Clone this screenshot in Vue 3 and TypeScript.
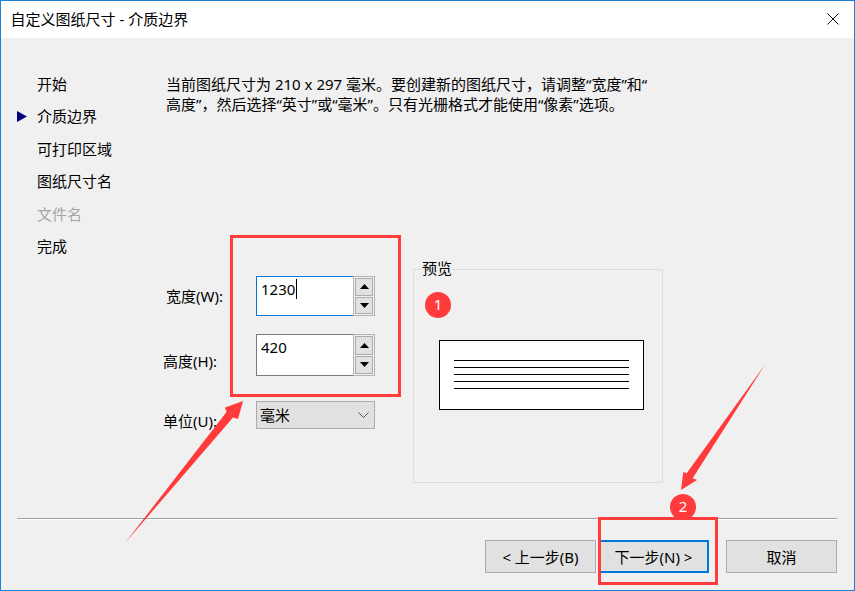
<script setup lang="ts">
const steps = [
  { label: '开始', active: false, disabled: false },
  { label: '介质边界', active: true, disabled: false },
  { label: '可打印区域', active: false, disabled: false },
  { label: '图纸尺寸名', active: false, disabled: false },
  { label: '文件名', active: false, disabled: true },
  { label: '完成', active: false, disabled: false },
]
const previewLines = [1, 2, 3, 4, 5]
</script>

<template>
  <div class="page">
    <div class="window">
      <header class="titlebar">
        <span>自定义图纸尺寸 - 介质边界</span>
        <svg class="close" width="12" height="12" viewBox="0 0 12 12">
          <path d="M0.5 0.5L11.5 11.5M11.5 0.5L0.5 11.5" stroke="#111" stroke-width="1" fill="none" />
        </svg>
      </header>

      <div class="content">
        <ul class="steps">
          <li v-for="s in steps" :key="s.label" class="step" :class="{ disabled: s.disabled }">
            <span class="marker">
              <svg v-if="s.active" width="10" height="11" viewBox="0 0 10 11">
                <path d="M0 0L10 5.5L0 11Z" fill="#000080" />
              </svg>
            </span>
            <span>{{ s.label }}</span>
          </li>
        </ul>

        <main class="main">
          <p class="intro">当前图纸尺寸为 210 x 297 毫米。要创建新的图纸尺寸，请调整“宽度”和“<br />高度”，然后选择“英寸”或“毫米”。只有光栅格式才能使用“像素”选项。</p>

          <div class="form-row">
            <div class="fields">
              <label class="label label-w">宽度(W):</label>
              <div class="spin">
                <div class="input focused">1230<span class="caret"></span></div>
                <div class="spin-btns">
                  <button class="spin-btn"><svg width="9" height="5" viewBox="0 0 9 5"><path d="M4.5 0L9 5H0Z" fill="#000" /></svg></button>
                  <button class="spin-btn"><svg width="9" height="5" viewBox="0 0 9 5"><path d="M0 0H9L4.5 5Z" fill="#000" /></svg></button>
                </div>
              </div>

              <label class="label label-h">高度(H):</label>
              <div class="spin">
                <div class="input">420</div>
                <div class="spin-btns">
                  <button class="spin-btn"><svg width="9" height="5" viewBox="0 0 9 5"><path d="M4.5 0L9 5H0Z" fill="#000" /></svg></button>
                  <button class="spin-btn"><svg width="9" height="5" viewBox="0 0 9 5"><path d="M0 0H9L4.5 5Z" fill="#000" /></svg></button>
                </div>
              </div>

              <label class="label label-u">单位(U):</label>
              <div class="select">
                <span>毫米</span>
                <svg width="11" height="6" viewBox="0 0 11 6">
                  <path d="M0.5 0.5L5.5 5.5L10.5 0.5" fill="none" stroke="#555" stroke-width="1" />
                </svg>
              </div>
            </div>

            <fieldset class="preview">
              <legend>预览</legend>
              <div class="paper">
                <div v-for="n in previewLines" :key="n" class="paper-line"></div>
              </div>
            </fieldset>
          </div>
        </main>
      </div>

      <footer class="footer">
        <div class="separator"></div>
        <div class="buttons">
          <button class="btn">&lt; 上一步(B)</button>
          <button class="btn primary">下一步(N) &gt;</button>
          <button class="btn cancel">取消</button>
        </div>
      </footer>
    </div>

    <div class="box box-fields"></div>
    <div class="box box-next"></div>
    <div class="badge badge-1">1</div>
    <div class="badge badge-2">2</div>
    <svg class="arrows" width="855" height="591" viewBox="0 0 855 591">
      <path d="M125 543L226.5 412L225 407.5L243 401L238 419L233 417.5Z" fill="#ff3b3b" />
      <path d="M765.5 364L692.7 478.3L697 480L681 490L683.3 472L686.7 473.3Z" fill="#ff3b3b" />
    </svg>
  </div>
</template>

<style scoped>
.page {
  position: relative;
  width: 855px;
  height: 591px;
  overflow: hidden;
  font-family: "Noto Sans", "Noto Sans CJK SC", sans-serif;
  font-size: 15px;
  color: #000;
}
.window {
  box-sizing: border-box;
  width: 855px;
  height: 591px;
  border: 1px solid #1883d7;
  background: #f0f0f0;
  display: flex;
  flex-direction: column;
}
.titlebar {
  height: 37px;
  flex: none;
  box-sizing: border-box;
  background: #fff;
  display: flex;
  align-items: center;
  justify-content: space-between;
  padding: 0 15px 2px 9.5px;
}
.content {
  flex: none;
  height: 480px;
  display: flex;
}
.steps {
  list-style: none;
  margin: 0;
  padding: 29.5px 0 0 16px;
  width: 146px;
  flex: none;
}
.step {
  height: 32.5px;
  display: flex;
  align-items: center;
  line-height: 20px;
}
.step.disabled {
  color: #a6a6a6;
}
.marker {
  width: 20px;
  flex: none;
  display: flex;
  align-items: center;
}
.main {
  flex: 1;
}
.intro {
  margin: 36px 0 0;
  padding-left: 3px;
  line-height: 20px;
  white-space: nowrap;
}
.form-row {
  margin-top: 145px;
  display: flex;
  align-items: flex-start;
}
.fields {
  width: 212px;
  margin-top: 17px;
  margin-right: 38px;
  display: grid;
  grid-template-columns: 93px 119px;
  grid-template-rows: 40px 42px 28px;
  row-gap: 18px;
  line-height: 20px;
}
.label-w {
  padding: 10px 0 0 3px;
}
.label-h {
  padding-top: 17px;
}
.label-u {
  padding-top: 10px;
}
.fields .select,
.fields .label-u {
  margin-top: 7px;
}
.spin {
  display: flex;
  height: 100%;
}
.input {
  box-sizing: border-box;
  width: 97px;
  border: 1px solid #7a7a7a;
  border-right: none;
  background: #fff;
  padding: 2px 0 0 4px;
  line-height: 20px;
  display: flex;
  align-items: flex-start;
}
.input.focused {
  border-color: #0078d7;
}
.caret {
  width: 1px;
  height: 20px;
  background: #000;
  margin-left: 1px;
  flex: none;
}
.spin-btns {
  box-sizing: border-box;
  width: 22px;
  border: 1px solid #b4b4b4;
  padding: 1px;
  display: flex;
  flex-direction: column;
  gap: 1px;
}
.spin-btn {
  flex: 1;
  margin: 0;
  padding: 0;
  border: 1px solid #adadad;
  background: #e1e1e1;
  display: flex;
  align-items: center;
  justify-content: center;
}
.select {
  box-sizing: border-box;
  height: 28px;
  border: 1px solid #adadad;
  background: #e1e1e1;
  display: flex;
  align-items: center;
  justify-content: space-between;
  padding: 0 5px 0 3px;
}
.preview {
  box-sizing: border-box;
  width: 250px;
  height: 224px;
  margin: 0;
  padding: 0;
  border: 1px solid #dcdcdc;
  min-width: 0;
}
.preview legend {
  margin-left: 8px;
  padding: 0 0 2px;
  line-height: 18px;
  background: #f0f0f0;
}
.paper {
  box-sizing: border-box;
  width: 205px;
  height: 70px;
  margin: 61px 0 0 25px;
  border: 1px solid #000;
  background: #fff;
  padding: 19px 14px 0;
  display: flex;
  flex-direction: column;
  gap: 6px;
}
.paper-line {
  height: 1px;
  width: 175px;
  background: #000;
}
.footer {
  flex: 1;
}
.separator {
  margin: 0 17px 0 16px;
  height: 1px;
  background: #a0a0a0;
  box-shadow: 0 1px 0 #fff;
}
.buttons {
  margin-top: 21px;
  padding-right: 17px;
  display: flex;
  justify-content: flex-end;
  gap: 2px;
}
.btn {
  box-sizing: border-box;
  width: 111px;
  height: 33px;
  margin: 0;
  padding: 0 0 1px;
  border: 1px solid #adadad;
  background: #e1e1e1;
  font: inherit;
  color: #000;
}
.btn.primary {
  border: 2px solid #0078d7;
}
.btn.cancel {
  margin-left: 15px;
}
.box {
  position: absolute;
  box-sizing: border-box;
  border: 3px solid #ff3b3b;
}
.box-fields {
  left: 230px;
  top: 235px;
  width: 171px;
  height: 162px;
}
.box-next {
  left: 598px;
  top: 517px;
  width: 120px;
  height: 68px;
}
.badge {
  position: absolute;
  width: 26px;
  height: 26px;
  border-radius: 50%;
  background: #ff3b3b;
  color: #fff;
  font-size: 15px;
  line-height: 24px;
  text-align: center;
}
.badge-1 {
  left: 425px;
  top: 292px;
}
.badge-2 {
  left: 670px;
  top: 494px;
}
.arrows {
  position: absolute;
  left: 0;
  top: 0;
  pointer-events: none;
}
</style>
